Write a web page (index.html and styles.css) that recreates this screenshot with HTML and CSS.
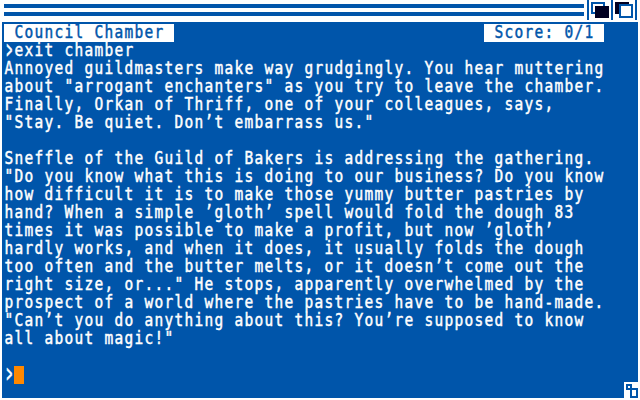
FILE: index.html
```html
<!DOCTYPE html>
<html lang="en">
<head>
<meta charset="utf-8">
<title>Council Chamber</title>
<link rel="stylesheet" href="styles.css">
</head>
<body>
<div class="window">
<header class="titlebar">
<div class="drag"></div>
<svg class="gadgets" width="56" height="20" viewBox="0 0 56 20" shape-rendering="crispEdges">
<path fill="#0055aa" d="M3 0h2v20h-2zM27 0h2v20h-2zM51 0h2v20h-2z"/>
<path fill="#0055aa" fill-rule="evenodd" d="M7 2h14v12h-14zM9 4v8h10v-8z"/>
<path fill="#000022" d="M11 6h14v12h-14zM31 2h14v12h-14z"/>
<path fill="#0055aa" d="M35 4h14v14h-14z"/>
<path fill="#fff" d="M37 6h10v10h-10z"/>
</svg>
</header>
<main class="screen">
<div class="status"><div class="room"><span class="label"> Council Chamber </span></div><div class="score"><span class="label"> Score: 0/1 </span></div></div>
<pre class="story"><span class="prompt">&gt;</span>exit chamber
Annoyed guildmasters make way grudgingly. You hear muttering
about "arrogant enchanters" as you try to leave the chamber.
Finally, Orkan of Thriff, one of your colleagues, says,
"Stay. Be quiet. Don’t embarrass us."

Sneffle of the Guild of Bakers is addressing the gathering.
"Do you know what this is doing to our business? Do you know
how difficult it is to make those yummy butter pastries by
hand? When a simple ’gloth’ spell would fold the dough 83
times it was possible to make a profit, but now ’gloth’
hardly works, and when it does, it usually folds the dough
too often and the butter melts, or it doesn’t come out the
right size, or..." He stops, apparently overwhelmed by the
prospect of a world where the pastries have to be hand-made.
"Can’t you do anything about this? You’re supposed to know
all about magic!"

<span class="prompt">&gt;</span><span class="cursor"></span></pre>
</main>
<svg class="resize" width="16" height="18" viewBox="0 0 16 18" shape-rendering="crispEdges">
<path fill="#fff" d="M0 0h16v18h-16z"/>
<path fill="#0055aa" d="M2 2h6v6h-6zM6 6h8v10h-8z"/>
<path fill="#fff" d="M4 4h2v2h-2zM8 8h4v6h-4z"/>
</svg>
</div>
</body>
</html>
```
FILE: styles.css
```css
body {
  margin: 0;
  background: #fff;
}

.window {
  position: relative;
  width: 640px;
  height: 400px;
  overflow: hidden;
  background: #fff;
  color: #fff;
  font: 14.5px/15px "DejaVu Sans Mono", monospace;
  letter-spacing: 1.27px;
  font-variant-ligatures: none;
}

.titlebar {
  display: flex;
  height: 22px;
}

.drag {
  width: 580px;
  height: 4px;
  margin: 4px 0 0 4px;
  border-top: 4px solid #0055aa;
  border-bottom: 4px solid #0055aa;
}

.screen {
  box-sizing: border-box;
  height: 376px;
  margin: 0 2px;
  padding: 2px;
  background: #0055aa;
}

.status {
  display: flex;
  justify-content: space-between;
  width: 600px;
  height: 18px;
  white-space: pre;
}

.room,
.score {
  background: #fff;
  color: #0055aa;
}

.room {
  width: 170px;
}

.score {
  width: 120px;
}

.label,
.story {
  display: block;
  transform: translateX(0.4px) scaleY(1.2);
  transform-origin: 0 0;
  -webkit-text-stroke: 0.4px currentColor;
}

.story {
  margin: 0;
  font: inherit;
}

.prompt {
  display: inline-block;
  width: 10px;
  height: 15px;
  letter-spacing: 0;
  vertical-align: top;
  transform: translateX(0.8px) scale(0.65, 1.4);
  transform-origin: 4px 60%;
}

.cursor {
  display: inline-block;
  width: 10px;
  height: 15px;
  background: #ff8800;
  vertical-align: top;
  transform: translateX(-0.4px);
}

.resize {
  position: absolute;
  right: 0;
  bottom: 0;
}
```
